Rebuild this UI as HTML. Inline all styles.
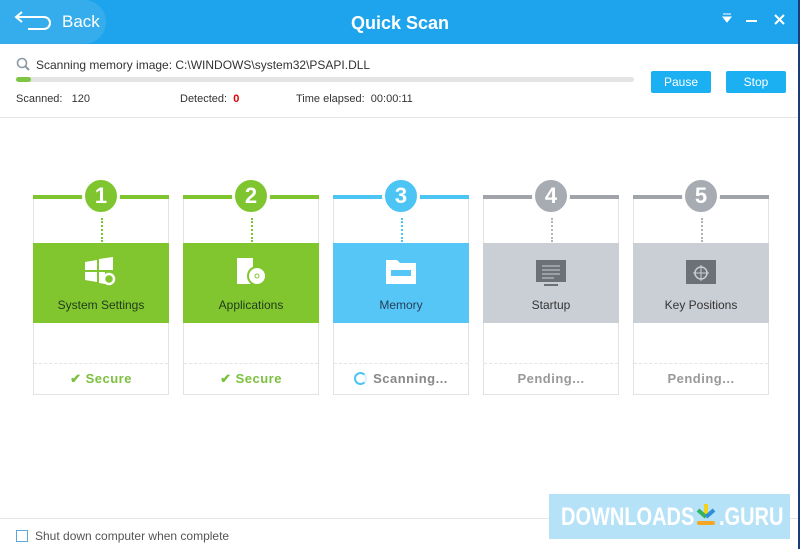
<!DOCTYPE html>
<html><head><style>
*{margin:0;padding:0;box-sizing:border-box}
body{width:800px;height:549px;overflow:hidden;background:#fff;font-family:"Liberation Sans",sans-serif;position:relative}
.hdr{position:absolute;left:0;top:0;width:800px;height:44px;background:#1da4ec}
.back{position:absolute;left:0;top:0;width:106px;height:44px;background:#35adec;border-radius:0 22px 22px 0}
.abs{position:absolute;white-space:nowrap}
.card{position:absolute;top:196px;width:136px;height:199px;border:1px solid #e3e3e3;border-top:none;background:#fff}
.bar{position:absolute;left:-1px;top:-1px;width:136px;height:4px}
.circ{position:absolute;left:48px;top:-19px;width:38px;height:38px;border-radius:50%;border:3px solid #fff;color:#fff;font-size:22px;font-weight:bold;text-align:center;line-height:32px}
.dots{position:absolute;left:67px;top:22px;height:24px;border-left:2px dotted}
.blk{position:absolute;left:-1px;top:47px;width:136px;height:80px}
.lbl{position:absolute;left:0;top:55px;width:100%;text-align:center;font-size:12px}
.sep{position:absolute;left:0;top:167px;width:100%;border-top:1px dashed #e4e4e4}
.st{position:absolute;left:0;top:175px;width:100%;text-align:center;font-size:13px;font-weight:bold;letter-spacing:.5px}
.btn{position:absolute;top:71px;width:60px;height:22px;background:#1ab0f2;border-radius:2px;color:#fff;font-size:12px;text-align:center;line-height:22px}
.wm{position:absolute;top:503px;font-size:25px;font-weight:bold;color:#fff;transform-origin:0 0;transform:scaleX(.8);white-space:nowrap}
</style></head><body>
<div class="hdr"></div>
<div class="back"></div>
<svg class="abs" style="left:14px;top:9px" width="40" height="22"><path d="M8 3 L2 8 L8 13 M2 8 H30 A6 6 0 0 1 30 20 H14" fill="none" stroke="#fff" stroke-width="2"/></svg>
<div class="abs" style="left:62px;top:12px;color:#fff;font-size:17px">Back</div>
<div class="abs" style="left:0;top:13px;width:800px;text-align:center;color:#fff;font-size:18px;font-weight:bold">Quick Scan</div>
<svg class="abs" style="left:720px;top:12px" width="70" height="16"><path d="M3 2H11M3 5H11L7 10Z" fill="#fff" stroke="#fff" stroke-width="1"/><path d="M26 9H37" stroke="#fff" stroke-width="2"/><path d="M55 3L64 12M64 3L55 12" stroke="#fff" stroke-width="2"/></svg>
<svg class="abs" style="left:16px;top:57px" width="14" height="14"><circle cx="6" cy="6" r="4.5" fill="none" stroke="#8a9aa6" stroke-width="1.6"/><path d="M9 9L13 13" stroke="#8a9aa6" stroke-width="2"/></svg>
<div class="abs" style="left:36px;top:58px;font-size:12px;color:#333">Scanning memory image: C:\WINDOWS\system32\PSAPI.DLL</div>
<div class="abs" style="left:16px;top:77px;width:618px;height:5px;background:#e4e4e4;border-radius:3px"></div>
<div class="abs" style="left:16px;top:77px;width:15px;height:5px;background:#7ec544;border-radius:3px"></div>
<div class="abs" style="left:16px;top:93px;font-size:11px;color:#333">Scanned:&nbsp;&nbsp;&nbsp;120</div>
<div class="abs" style="left:180px;top:93px;font-size:11px;color:#333">Detected:&nbsp;&nbsp;<b style="color:#d00">0</b></div>
<div class="abs" style="left:296px;top:93px;font-size:11px;color:#333">Time elapsed:&nbsp;&nbsp;00:00:11</div>
<div class="btn" style="left:651px">Pause</div>
<div class="btn" style="left:726px">Stop</div>
<div class="abs" style="left:0;top:117px;width:800px;border-top:1px solid #e6e6e6"></div>

<div class="card" style="left:33px"><div class="bar" style="background:#7ec52f"></div><div class="circ" style="background:#7ec52f">1</div><div class="dots" style="border-color:#7ec52f"></div><div class="blk" style="background:#82c62f"><svg class="abs" style="left:50px;top:13px" width="34" height="30"><path d="M2 6L14 4V14H2ZM16 3L30 1V14H16ZM2 16H14V26L2 24ZM16 16H22V28L16 27Z" fill="#fff"/><circle cx="26" cy="23" r="5" fill="none" stroke="#fff" stroke-width="2.5"/></svg><div class="lbl" style="color:#1f3b1a">System Settings</div></div><div class="sep"></div><div class="st" style="color:#7cc040">✔ Secure</div></div>

<div class="card" style="left:183px"><div class="bar" style="background:#7ec52f"></div><div class="circ" style="background:#7ec52f">2</div><div class="dots" style="border-color:#7ec52f"></div><div class="blk" style="background:#82c62f"><svg class="abs" style="left:52px;top:13px" width="34" height="32"><path d="M2 2H18V28H2Z" fill="#fff"/><circle cx="22" cy="20" r="9" fill="#fff" stroke="#82c62f" stroke-width="2"/><circle cx="22" cy="20" r="2" fill="none" stroke="#82c62f"/></svg><div class="lbl" style="color:#1f3b1a">Applications</div></div><div class="sep"></div><div class="st" style="color:#7cc040">✔ Secure</div></div>

<div class="card" style="left:333px"><div class="bar" style="background:#4cc4f4"></div><div class="circ" style="background:#4cc4f4">3</div><div class="dots" style="border-color:#4cc4f4"></div><div class="blk" style="background:#56c6f6"><svg class="abs" style="left:51px;top:15px" width="34" height="28"><path d="M2 2H13L16 5H32V26H2Z" fill="#fff"/><rect x="7" y="12" width="20" height="6" fill="#56c6f6"/></svg><div class="lbl" style="color:#26405a">Memory</div></div><div class="sep"></div><div class="st" style="color:#888"><span style="display:inline-block;width:13px;height:13px;border:2px solid #4cc4f4;border-right-color:#d9f1fc;border-radius:50%;vertical-align:-2px;margin-right:6px"></span>Scanning...</div></div>

<div class="card" style="left:483px"><div class="bar" style="background:#a0a4aa"></div><div class="circ" style="background:#a7abb2">4</div><div class="dots" style="border-color:#b0b3b8"></div><div class="blk" style="background:#caced5"><svg class="abs" style="left:51px;top:15px" width="34" height="30"><rect x="2" y="2" width="30" height="22" fill="#6c7178"/><path d="M8 8H26M8 12H26M8 16H26M8 20H20" stroke="#caced5"/><rect x="10" y="26" width="14" height="2" fill="#6c7178"/></svg><div class="lbl" style="color:#333">Startup</div></div><div class="sep"></div><div class="st" style="color:#999">Pending...</div></div>

<div class="card" style="left:633px"><div class="bar" style="background:#a0a4aa"></div><div class="circ" style="background:#a7abb2">5</div><div class="dots" style="border-color:#b0b3b8"></div><div class="blk" style="background:#caced5"><svg class="abs" style="left:51px;top:15px" width="34" height="30"><rect x="2" y="2" width="30" height="24" fill="#6c7178"/><circle cx="17" cy="15" r="6" fill="none" stroke="#caced5" stroke-width="1.5"/><path d="M17 7V23M9 15H25" stroke="#caced5"/></svg><div class="lbl" style="color:#333">Key Positions</div></div><div class="sep"></div><div class="st" style="color:#999">Pending...</div></div>

<div class="abs" style="left:0;top:518px;width:800px;border-top:1px solid #e6e6e6"></div>
<div class="abs" style="left:16px;top:530px;width:12px;height:12px;border:1px solid #5aa8d8"></div>
<div class="abs" style="left:35px;top:529px;font-size:12px;color:#555">Shut down computer when complete</div>
<div class="abs" style="left:549px;top:494px;width:241px;height:45px;background:#b6e2f8"></div>
<div class="wm" style="left:561px">DOWNLOADS</div>
<div class="wm" style="left:719px">.GURU</div>
<svg class="abs" style="left:694px;top:500px" width="24" height="28"><path d="M12 4V16" stroke="#f2d21b" stroke-width="4"/><path d="M4 10L12 17" stroke="#36b35a" stroke-width="4"/><path d="M20 10L12 17" stroke="#2a8fd8" stroke-width="4"/><rect x="3" y="21" width="18" height="4" rx="2" fill="#f5a623"/></svg>
<div class="abs" style="left:798px;top:0;width:2px;height:549px;background:#1a3c7a"></div>
</body></html>
